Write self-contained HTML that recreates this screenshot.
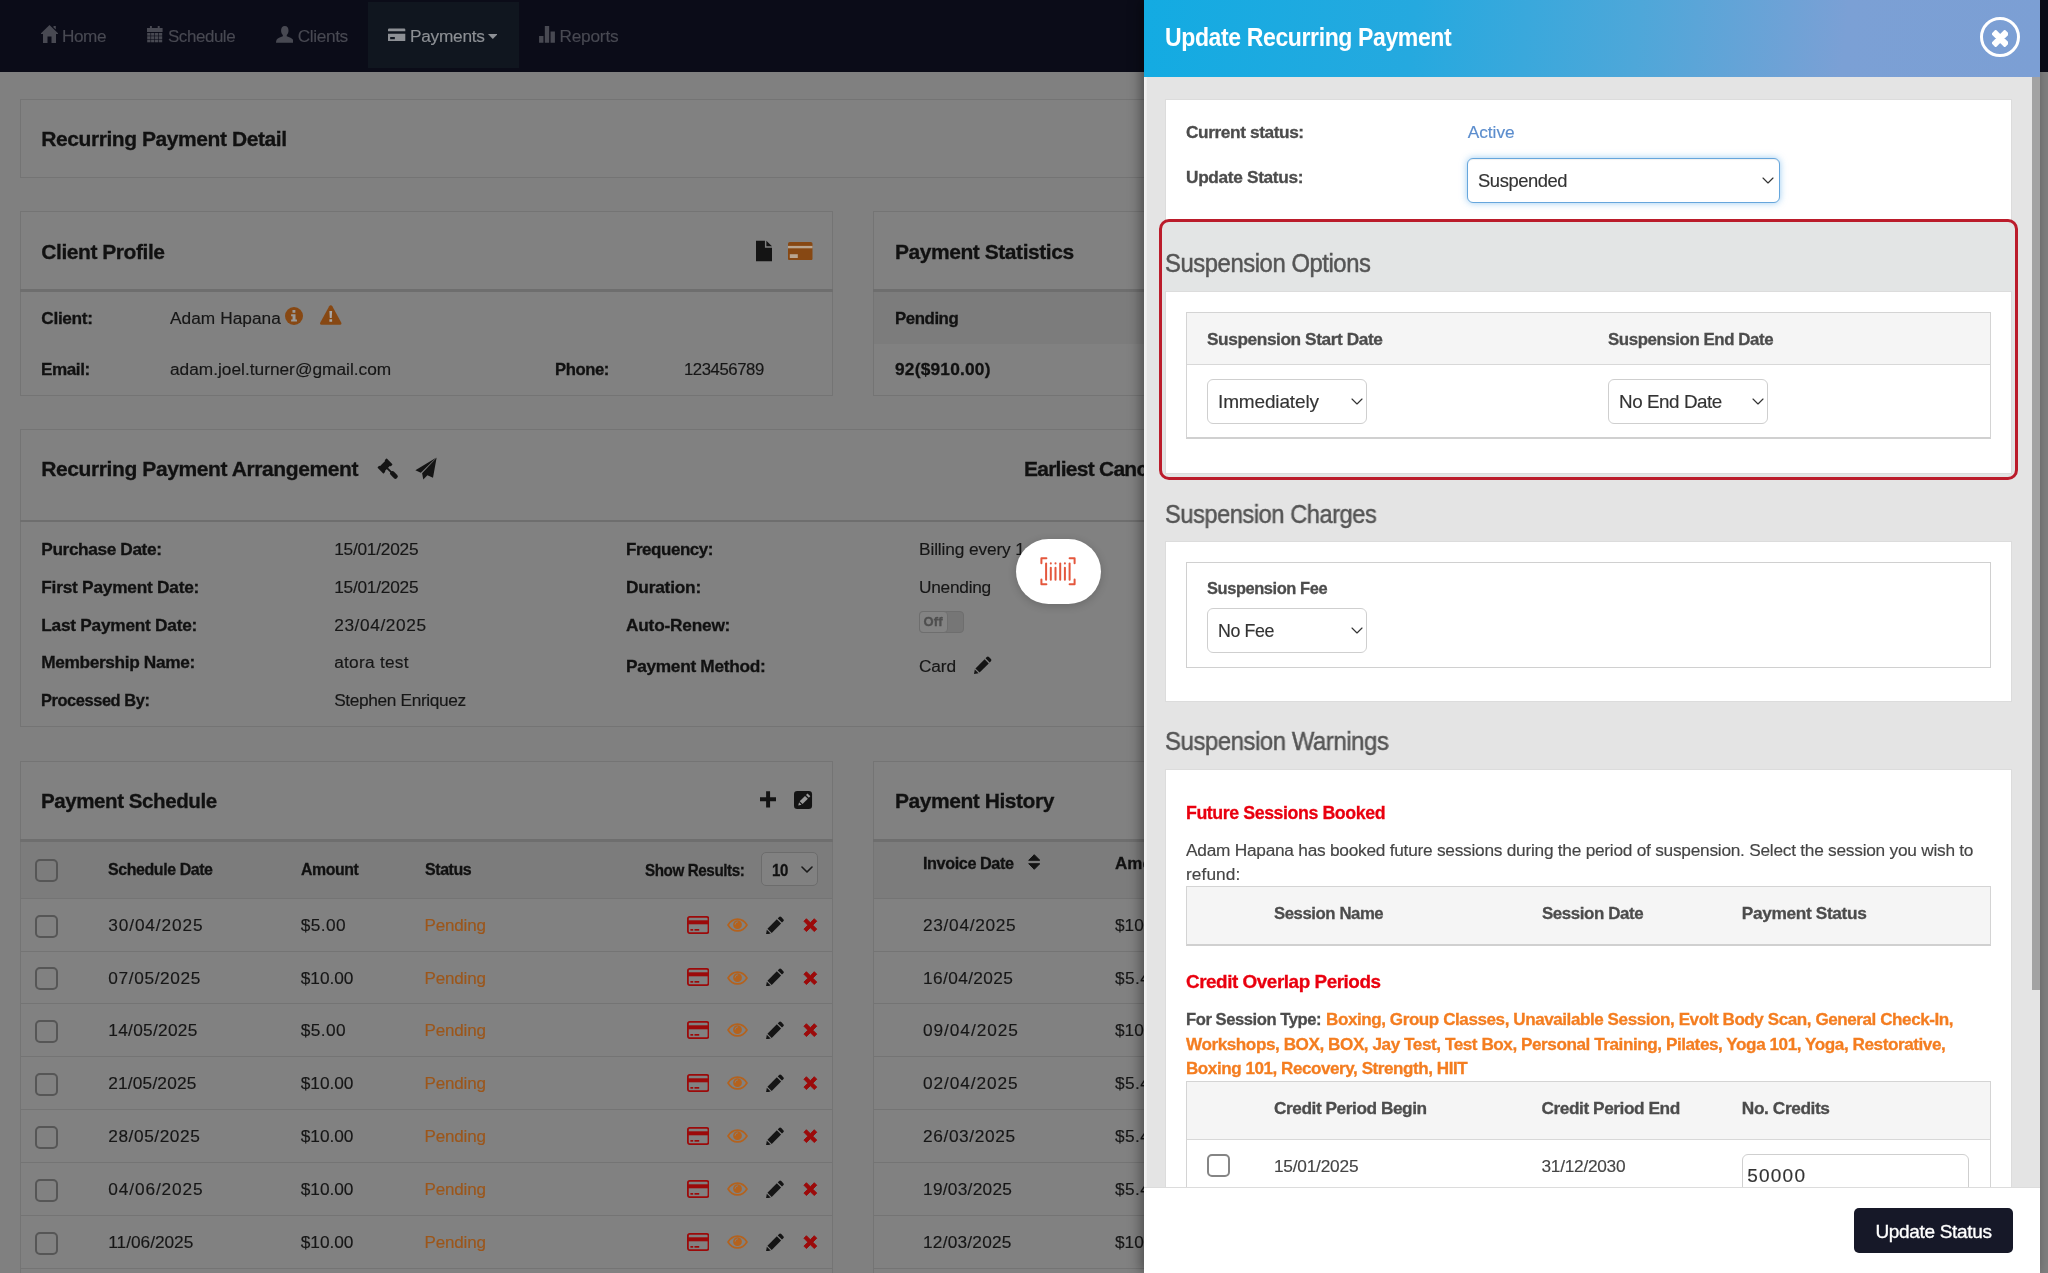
<!DOCTYPE html>
<html lang="en"><head><meta charset="utf-8"><title>Update Recurring Payment</title>
<style>
html,body{margin:0;padding:0;}
body{width:2048px;height:1273px;overflow:hidden;position:relative;background:#808080;font-family:"Liberation Sans",sans-serif;}
.t{position:absolute;white-space:nowrap;line-height:1;transform-origin:0 0;}
#left{position:absolute;left:0;top:0;width:2048px;height:1273px;overflow:hidden;will-change:transform;}
#modal{position:absolute;left:0;top:0;width:2048px;height:1273px;overflow:hidden;will-change:transform;}
</style></head><body>
<div id="left">
<div style="position:absolute;left:0px;top:0px;width:2048px;height:72px;background:#0b0c18;"></div>
<div style="position:absolute;left:368px;top:2px;width:151px;height:66px;background:#10161f;"></div>
<svg style="position:absolute;left:40.5px;top:25px;" width="17" height="18" viewBox="0 0 17 18"><path fill="#484952" d="M8.5 0 L17 8.2 V9 H15 V18 H10.5 V11.5 H6.5 V18 H2 V9 H0 V8.2 Z M12.5 1 h2.3 v3.6 l-2.3 -2.2z"/></svg>
<span class="t" style="left:61.7px;top:28.0px;font-size:17.3px;letter-spacing:-0.45px;transform:scaleX(0.9933);color:#484952;-webkit-text-stroke:0.15px #484952;">Home</span>
<svg style="position:absolute;left:147px;top:26px;" width="15.6" height="16.8" viewBox="0 0 16 17"><path fill="#484952" d="M0 2 H16 V6 H0Z M3 0 h2 v3.4 h-2z M11 0 h2 v3.4 h-2z"/><rect x="0.2" y="7.0" width="3.4" height="2.8" fill="#484952"/><rect x="4.2" y="7.0" width="3.4" height="2.8" fill="#484952"/><rect x="8.2" y="7.0" width="3.4" height="2.8" fill="#484952"/><rect x="12.2" y="7.0" width="3.4" height="2.8" fill="#484952"/><rect x="0.2" y="10.4" width="3.4" height="2.8" fill="#484952"/><rect x="4.2" y="10.4" width="3.4" height="2.8" fill="#484952"/><rect x="8.2" y="10.4" width="3.4" height="2.8" fill="#484952"/><rect x="12.2" y="10.4" width="3.4" height="2.8" fill="#484952"/><rect x="0.2" y="13.8" width="3.4" height="2.8" fill="#484952"/><rect x="4.2" y="13.8" width="3.4" height="2.8" fill="#484952"/><rect x="8.2" y="13.8" width="3.4" height="2.8" fill="#484952"/><rect x="12.2" y="13.8" width="3.4" height="2.8" fill="#484952"/></svg>
<span class="t" style="left:168.1px;top:28.0px;font-size:17.3px;letter-spacing:-0.45px;transform:scaleX(0.9813);color:#484952;-webkit-text-stroke:0.15px #484952;">Schedule</span>
<svg style="position:absolute;left:275.8px;top:26px;" width="17.6" height="16.8" viewBox="0 0 18 17"><path fill="#484952" d="M9 0 C11.6 0 12.8 2 12.8 4.6 C12.8 6.6 12 8.3 11 9.2 V10.4 C13.6 11.4 16.6 12.4 17.4 14 C17.8 14.9 18 16 18 17 H0 C0 16 .2 14.9 .6 14 C1.4 12.4 4.4 11.4 7 10.4 V9.2 C6 8.3 5.2 6.6 5.2 4.6 C5.2 2 6.4 0 9 0Z"/></svg>
<span class="t" style="left:297.8px;top:28.0px;font-size:17.3px;letter-spacing:-0.41px;color:#484952;-webkit-text-stroke:0.15px #484952;">Clients</span>
<svg style="position:absolute;left:388.4px;top:27.5px;" width="17.3" height="13.8" viewBox="0 0 24 18"><path fill="#8d9095" fill-rule="evenodd" d="M1.5 0 H22.5 Q24 0 24 1.5 V4 H0 V1.5 Q0 0 1.5 0Z M0 7.5 H24 V16.5 Q24 18 22.5 18 H1.5 Q0 18 0 16.5Z M3 12 H9.5 V15 H3Z"/></svg>
<span class="t" style="left:410.0px;top:28.0px;font-size:17.3px;letter-spacing:-0.27px;color:#8d9095;-webkit-text-stroke:0.15px #8d9095;">Payments</span>
<svg style="position:absolute;left:487.8px;top:34px;" width="9.6" height="5" viewBox="0 0 10 5"><path fill="#8d9095" d="M0 0H10L5 5Z"/></svg>
<svg style="position:absolute;left:539.4px;top:26px;" width="16" height="16.8" viewBox="0 0 16 17"><path fill="#484952" d="M0 10h4.4v7H0z M5.8 0h4.4v17H5.8z M11.6 5.5H16V17h-4.4z"/></svg>
<span class="t" style="left:559.4px;top:28.0px;font-size:17.3px;letter-spacing:-0.21px;color:#484952;-webkit-text-stroke:0.15px #484952;">Reports</span>
<div style="position:absolute;left:20px;top:99px;width:1200px;height:79px;background:#818181;border:1px solid #747474;box-sizing:border-box;"></div>
<span class="t" style="left:41.3px;top:128.0px;font-size:21px;letter-spacing:-0.43px;font-weight:700;color:#111111;-webkit-text-stroke:0.3px #111111;">Recurring Payment Detail</span>
<div style="position:absolute;left:20px;top:211px;width:813px;height:185px;background:#818181;border:1px solid #747474;box-sizing:border-box;"></div><div style="position:absolute;left:20px;top:289.0px;width:813px;height:2.5px;background:#6e6e6e;"></div>
<span class="t" style="left:41.3px;top:241.0px;font-size:21px;letter-spacing:-0.45px;font-weight:700;color:#111111;-webkit-text-stroke:0.3px #111111;">Client Profile</span>
<svg style="position:absolute;left:755.5px;top:239.7px;" width="16" height="22" viewBox="0 0 17 22"><path fill="#141414" d="M0 0H9.5V7.5H17V22H0Z M11 0 L17 6 H11Z"/></svg>
<svg style="position:absolute;left:788.2px;top:241.6px;" width="24.5" height="18.3" viewBox="0 0 24.500 18.300"><rect x="0" y="0" width="24.500" height="18.300" rx="1.800" fill="#874813"/><rect x="0" y="3.900" width="24.500" height="2.400" fill="#b9a590"/><rect x="1.800" y="12.200" width="8" height="3.800" fill="#b9a590"/></svg>
<span class="t" style="left:41.3px;top:310.0px;font-size:17.3px;letter-spacing:-0.35px;font-weight:700;color:#111111;-webkit-text-stroke:0.3px #111111;">Client:</span>
<span class="t" style="left:170.0px;top:310.0px;font-size:17.3px;letter-spacing:0.04px;color:#161616;-webkit-text-stroke:0.15px #161616;">Adam Hapana</span>
<span class="t" style="left:41.3px;top:361.0px;font-size:17.3px;letter-spacing:-0.45px;transform:scaleX(0.9906);font-weight:700;color:#111111;-webkit-text-stroke:0.3px #111111;">Email:</span>
<span class="t" style="left:170.0px;top:361.0px;font-size:17.3px;color:#161616;-webkit-text-stroke:0.15px #161616;">adam.joel.turner@gmail.com</span>
<span class="t" style="left:555.4px;top:361.0px;font-size:17.3px;letter-spacing:-0.45px;transform:scaleX(0.9649);font-weight:700;color:#111111;-webkit-text-stroke:0.3px #111111;">Phone:</span>
<span class="t" style="left:683.8px;top:361.0px;font-size:17.3px;letter-spacing:-0.45px;transform:scaleX(0.9687);color:#161616;-webkit-text-stroke:0.15px #161616;">123456789</span>
<svg style="position:absolute;left:285.3px;top:307px;" width="18" height="18" viewBox="0 0 20 20"><circle cx="10" cy="10" r="10" fill="#874813"/><path fill="#9a9a9a" d="M8.3 3.2h3.2v3.1H8.3z M6.8 8h4.9v6h1.6v2.2H6.8V14h1.6v-3.8H6.8z"/></svg>
<svg style="position:absolute;left:320px;top:305px;" width="21.5" height="20" viewBox="0 0 22 20"><path fill="#874813" d="M11 0 Q12 0 12.6 1 L21.7 17.6 Q22.5 20 20.4 20 H1.6 Q-.5 20 .3 17.6 L9.4 1 Q10 0 11 0Z"/><path fill="#a8a8a8" d="M9.6 6h2.8l-.4 7h-2z M9.6 14.3h2.8v2.6H9.6z"/></svg>
<div style="position:absolute;left:873px;top:211px;width:400px;height:185px;background:#818181;border:1px solid #747474;box-sizing:border-box;"></div><div style="position:absolute;left:873px;top:289.0px;width:400px;height:2.5px;background:#6e6e6e;"></div>
<div style="position:absolute;left:874px;top:291.5px;width:400px;height:52px;background:#7c7c7c;"></div>
<span class="t" style="left:895.0px;top:241.0px;font-size:21px;letter-spacing:-0.45px;transform:scaleX(0.9978);font-weight:700;color:#111111;-webkit-text-stroke:0.3px #111111;">Payment Statistics</span>
<span class="t" style="left:895.0px;top:310.0px;font-size:17.3px;letter-spacing:-0.45px;transform:scaleX(0.9735);font-weight:700;color:#111111;-webkit-text-stroke:0.3px #111111;">Pending</span>
<span class="t" style="left:895.0px;top:361.0px;font-size:17.3px;letter-spacing:0.22px;font-weight:700;color:#111111;-webkit-text-stroke:0.3px #111111;">92($910.00)</span>
<div style="position:absolute;left:20px;top:429px;width:1200px;height:298px;background:#818181;border:1px solid #747474;box-sizing:border-box;"></div><div style="position:absolute;left:20px;top:519.5px;width:1200px;height:2.5px;background:#6e6e6e;"></div>
<span class="t" style="left:41.3px;top:458.0px;font-size:21px;letter-spacing:-0.40px;font-weight:700;color:#111111;-webkit-text-stroke:0.3px #111111;">Recurring Payment Arrangement</span>
<svg style="position:absolute;left:374.5px;top:455.9px;" width="26" height="26" viewBox="0 0 26 26"><g fill="#141414" transform="translate(10 10) rotate(45)"><rect x="-3.5" y="-4.4" width="7" height="8.8"/><rect x="-4.3" y="-6.5" width="8.6" height="2.9" rx=".7"/><rect x="-4.3" y="3.6" width="8.6" height="2.9" rx=".7"/><rect x="3" y="-.9" width="6.5" height="1.8"/><rect x="8.2" y="-2.3" width="8.8" height="4.6" rx="2"/></g></svg>
<svg style="position:absolute;left:415px;top:457px;" width="23" height="23" viewBox="0 0 23 23"><g fill="#141414"><path d="M21.5 .6 L.4 13.3 L5.8 15.8Z"/><path d="M21.6 .8 L18 20.8 L12.4 18.3 L8.3 22.4 L7.1 16.2Z"/></g></svg>
<span class="t" style="left:1024.0px;top:458.0px;font-size:21px;font-weight:700;color:#111111;-webkit-text-stroke:0.3px #111111;letter-spacing:-0.75px;">Earliest Cancellation</span>
<span class="t" style="left:41.3px;top:541.0px;font-size:17.3px;letter-spacing:-0.40px;font-weight:700;color:#111111;-webkit-text-stroke:0.3px #111111;">Purchase Date:</span>
<span class="t" style="left:334.2px;top:541.0px;font-size:17.3px;letter-spacing:-0.24px;color:#161616;-webkit-text-stroke:0.15px #161616;">15/01/2025</span>
<span class="t" style="left:41.3px;top:579.0px;font-size:17.3px;letter-spacing:-0.24px;font-weight:700;color:#111111;-webkit-text-stroke:0.3px #111111;">First Payment Date:</span>
<span class="t" style="left:334.2px;top:579.0px;font-size:17.3px;letter-spacing:-0.24px;color:#161616;-webkit-text-stroke:0.15px #161616;">15/01/2025</span>
<span class="t" style="left:41.3px;top:617.0px;font-size:17.3px;letter-spacing:-0.26px;font-weight:700;color:#111111;-webkit-text-stroke:0.3px #111111;">Last Payment Date:</span>
<span class="t" style="left:334.2px;top:617.0px;font-size:17.3px;letter-spacing:0.60px;color:#161616;-webkit-text-stroke:0.15px #161616;">23/04/2025</span>
<span class="t" style="left:41.3px;top:654.0px;font-size:17.3px;letter-spacing:-0.37px;font-weight:700;color:#111111;-webkit-text-stroke:0.3px #111111;">Membership Name:</span>
<span class="t" style="left:334.2px;top:654.0px;font-size:17.3px;letter-spacing:0.26px;color:#161616;-webkit-text-stroke:0.15px #161616;">atora test</span>
<span class="t" style="left:41.3px;top:692.0px;font-size:17.3px;letter-spacing:-0.45px;transform:scaleX(0.9503);font-weight:700;color:#111111;-webkit-text-stroke:0.3px #111111;">Processed By:</span>
<span class="t" style="left:334.2px;top:692.0px;font-size:17.3px;letter-spacing:-0.36px;color:#161616;-webkit-text-stroke:0.15px #161616;">Stephen Enriquez</span>
<span class="t" style="left:626.0px;top:541.0px;font-size:17.3px;letter-spacing:-0.45px;transform:scaleX(0.9820);font-weight:700;color:#111111;-webkit-text-stroke:0.3px #111111;">Frequency:</span>
<span class="t" style="left:626.0px;top:579.0px;font-size:17.3px;letter-spacing:-0.20px;font-weight:700;color:#111111;-webkit-text-stroke:0.3px #111111;">Duration:</span>
<span class="t" style="left:626.0px;top:617.0px;font-size:17.3px;letter-spacing:-0.22px;font-weight:700;color:#111111;-webkit-text-stroke:0.3px #111111;">Auto-Renew:</span>
<span class="t" style="left:626.0px;top:658.0px;font-size:17.3px;letter-spacing:-0.31px;font-weight:700;color:#111111;-webkit-text-stroke:0.3px #111111;">Payment Method:</span>
<span class="t" style="left:919.0px;top:541.0px;font-size:17.3px;color:#161616;-webkit-text-stroke:0.15px #161616;letter-spacing:-0.12px;">Billing every 1 week</span>
<span class="t" style="left:919.0px;top:579.0px;font-size:17.3px;letter-spacing:-0.25px;color:#161616;-webkit-text-stroke:0.15px #161616;">Unending</span>
<div style="position:absolute;left:918.5px;top:611px;width:45px;height:21.5px;background:#767676;border-radius:4px;border:1px solid #6e6e6e;box-sizing:border-box;"></div>
<div style="position:absolute;left:918.5px;top:611px;width:29px;height:21.5px;background:#838383;border-radius:4px;border:1px solid #6e6e6e;box-sizing:border-box;"></div>
<span class="t" style="left:923.5px;top:615.0px;font-size:13px;letter-spacing:0.11px;font-weight:700;color:#4f4f4f;-webkit-text-stroke:0.3px #4f4f4f;">Off</span>
<span class="t" style="left:919.0px;top:658.0px;font-size:17.3px;letter-spacing:-0.13px;color:#161616;-webkit-text-stroke:0.15px #161616;">Card</span>
<svg style="position:absolute;left:973.8px;top:656px;" width="18" height="18" viewBox="0 0 20 20"><g fill="#141414"><path d="M14.2 1.2 Q15.4 0 16.6 1.2 L18.8 3.4 Q20 4.6 18.8 5.8 L17.4 7.2 L12.8 2.6Z"/><path d="M11.8 3.6 L16.4 8.2 L6.2 18.4 L1.6 13.8Z"/><path d="M0.9 14.9 L5.1 19.1 L0 20Z"/></g></svg>
<div style="position:absolute;left:20px;top:761px;width:813px;height:560px;background:#818181;border:1px solid #747474;box-sizing:border-box;"></div><div style="position:absolute;left:20px;top:839.0px;width:813px;height:2.5px;background:#6e6e6e;"></div>
<div style="position:absolute;left:21px;top:841.5px;width:811px;height:56.5px;background:#7c7c7c;"></div>
<span class="t" style="left:41.3px;top:790.0px;font-size:21px;letter-spacing:-0.45px;transform:scaleX(0.9784);font-weight:700;color:#111111;-webkit-text-stroke:0.3px #111111;">Payment Schedule</span>
<svg style="position:absolute;left:759.9px;top:791.2px;" width="16.2" height="16.7" viewBox="0 0 18 18"><path fill="#141414" d="M6.8 0h4.4v6.8H18v4.4h-6.8V18H6.8v-6.8H0V6.8h6.8z"/></svg>
<svg style="position:absolute;left:794px;top:790px;" width="19" height="19" viewBox="0 0 20 20"><rect x="0" y="1" width="19" height="19" rx="3.5" fill="#141414"/><g fill="#9a9a9a"><path d="M12.6 5.2 l1.6-1.6 l3 3 l-1.6 1.6z"/><path d="M11.6 6.2 l3 3 l-5.6 5.6 l-3 -3z"/><path d="M5.3 12.9 l2.6 2.6 l-3.4 .8z"/></g></svg>
<div style="position:absolute;left:35px;top:858.7px;width:23px;height:23px;border:2px solid #565656;border-radius:5px;box-sizing:border-box;background:transparent;"></div>
<span class="t" style="left:108.3px;top:861.0px;font-size:17px;letter-spacing:-0.45px;transform:scaleX(0.9396);font-weight:700;color:#111111;-webkit-text-stroke:0.3px #111111;">Schedule Date</span>
<span class="t" style="left:300.8px;top:861.0px;font-size:17px;letter-spacing:-0.45px;transform:scaleX(0.9329);font-weight:700;color:#111111;-webkit-text-stroke:0.3px #111111;">Amount</span>
<span class="t" style="left:424.6px;top:861.0px;font-size:17px;letter-spacing:-0.45px;transform:scaleX(0.9395);font-weight:700;color:#111111;-webkit-text-stroke:0.3px #111111;">Status</span>
<span class="t" style="left:644.6px;top:862.0px;font-size:17px;letter-spacing:-0.45px;transform:scaleX(0.8941);font-weight:700;color:#111111;-webkit-text-stroke:0.3px #111111;">Show Results:</span>
<div style="position:absolute;left:761.4px;top:852.3px;width:56.8px;height:34px;border:1px solid #6c6c6c;border-radius:5px;box-sizing:border-box;background:#818181;"></div>
<span class="t" style="left:771.5px;top:862.0px;font-size:17px;letter-spacing:-0.45px;transform:scaleX(0.8830);font-weight:700;color:#111111;-webkit-text-stroke:0.3px #111111;">10</span>
<svg style="position:absolute;left:801px;top:866px;" width="12" height="7" viewBox="0 0 12 7"><path fill="none" stroke="#1a1a1a" stroke-width="1.6" stroke-linecap="round" stroke-linejoin="round" d="M1 1 L6 6 L11 1"/></svg>
<div style="position:absolute;left:21px;top:898px;width:811px;height:1px;background:#747474;"></div>
<div style="position:absolute;left:35px;top:914.8px;width:23px;height:23px;border:2px solid #565656;border-radius:5px;box-sizing:border-box;background:transparent;"></div>
<span class="t" style="left:108.3px;top:917.0px;font-size:17.3px;letter-spacing:0.86px;color:#161616;-webkit-text-stroke:0.15px #161616;">30/04/2025</span>
<span class="t" style="left:300.8px;top:917.0px;font-size:17.3px;letter-spacing:0.38px;color:#161616;-webkit-text-stroke:0.15px #161616;">$5.00</span>
<span class="t" style="left:424.6px;top:917.0px;font-size:17px;letter-spacing:-0.17px;color:#9c561a;-webkit-text-stroke:0.15px #9c561a;">Pending</span>
<svg style="position:absolute;left:686.6px;top:915.6px;" width="22.4" height="18" viewBox="0 0 22.400 18"><rect x=".9" y=".9" width="20.600" height="16.200" rx="1.800" fill="none" stroke="#9c0a0a" stroke-width="1.800"/><rect x=".9" y="4.300" width="20.600" height="4" fill="#9c0a0a"/><rect x="3.400" y="13" width="2.800" height="1.700" fill="#9c0a0a"/><rect x="7.500" y="13" width="4.700" height="1.700" fill="#9c0a0a"/></svg>
<svg style="position:absolute;left:727.2px;top:917.9px;" width="21" height="14" viewBox="0 0 24 16"><path fill="none" stroke="#b4621d" stroke-width="1.900" d="M1.200 8 C4 3.300 8 1.200 12 1.200 C16 1.200 20 3.300 22.800 8 C20 12.700 16 14.800 12 14.800 C8 14.800 4 12.700 1.200 8Z"/><circle cx="12" cy="7.600" r="5" fill="#b4621d"/><path fill="none" stroke="#818181" stroke-width="1" stroke-linecap="round" d="M9.200 7.200 A2.900 2.900 0 0 1 12 4.400"/></svg>
<svg style="position:absolute;left:766px;top:915.5px;" width="18.4" height="18.4" viewBox="0 0 20 20"><g fill="#141414"><path d="M14.2 1.2 Q15.4 0 16.6 1.2 L18.8 3.4 Q20 4.6 18.8 5.8 L17.4 7.2 L12.8 2.6Z"/><path d="M11.8 3.6 L16.4 8.2 L6.2 18.4 L1.6 13.8Z"/><path d="M0.9 14.9 L5.1 19.1 L0 20Z"/></g></svg>
<svg style="position:absolute;left:803.1px;top:918px;" width="14.7" height="14.3" viewBox="0 0 16 16"><path fill="#9c0a0a" stroke="#9c0a0a" stroke-width="1" stroke-linejoin="round" d="M3.600 .8 L8 5.200 L12.400 .8 L15.200 3.600 L10.800 8 L15.200 12.400 L12.400 15.200 L8 10.800 L3.600 15.200 L.8 12.400 L5.200 8 L.8 3.600Z"/></svg>
<div style="position:absolute;left:21px;top:950.6px;width:811px;height:1px;background:#747474;"></div>
<div style="position:absolute;left:35px;top:967.4px;width:23px;height:23px;border:2px solid #565656;border-radius:5px;box-sizing:border-box;background:transparent;"></div>
<span class="t" style="left:108.3px;top:970.0px;font-size:17.3px;letter-spacing:0.63px;color:#161616;-webkit-text-stroke:0.15px #161616;">07/05/2025</span>
<span class="t" style="left:300.8px;top:970.0px;font-size:17.3px;letter-spacing:-0.04px;color:#161616;-webkit-text-stroke:0.15px #161616;">$10.00</span>
<span class="t" style="left:424.6px;top:970.0px;font-size:17px;letter-spacing:-0.17px;color:#9c561a;-webkit-text-stroke:0.15px #9c561a;">Pending</span>
<svg style="position:absolute;left:686.6px;top:968.2px;" width="22.4" height="18" viewBox="0 0 22.400 18"><rect x=".9" y=".9" width="20.600" height="16.200" rx="1.800" fill="none" stroke="#9c0a0a" stroke-width="1.800"/><rect x=".9" y="4.300" width="20.600" height="4" fill="#9c0a0a"/><rect x="3.400" y="13" width="2.800" height="1.700" fill="#9c0a0a"/><rect x="7.500" y="13" width="4.700" height="1.700" fill="#9c0a0a"/></svg>
<svg style="position:absolute;left:727.2px;top:970.5px;" width="21" height="14" viewBox="0 0 24 16"><path fill="none" stroke="#b4621d" stroke-width="1.900" d="M1.200 8 C4 3.300 8 1.200 12 1.200 C16 1.200 20 3.300 22.800 8 C20 12.700 16 14.800 12 14.800 C8 14.800 4 12.700 1.200 8Z"/><circle cx="12" cy="7.600" r="5" fill="#b4621d"/><path fill="none" stroke="#818181" stroke-width="1" stroke-linecap="round" d="M9.200 7.200 A2.900 2.900 0 0 1 12 4.400"/></svg>
<svg style="position:absolute;left:766px;top:968.1px;" width="18.4" height="18.4" viewBox="0 0 20 20"><g fill="#141414"><path d="M14.2 1.2 Q15.4 0 16.6 1.2 L18.8 3.4 Q20 4.6 18.8 5.8 L17.4 7.2 L12.8 2.6Z"/><path d="M11.8 3.6 L16.4 8.2 L6.2 18.4 L1.6 13.8Z"/><path d="M0.9 14.9 L5.1 19.1 L0 20Z"/></g></svg>
<svg style="position:absolute;left:803.1px;top:970.6px;" width="14.7" height="14.3" viewBox="0 0 16 16"><path fill="#9c0a0a" stroke="#9c0a0a" stroke-width="1" stroke-linejoin="round" d="M3.600 .8 L8 5.200 L12.400 .8 L15.200 3.600 L10.800 8 L15.200 12.400 L12.400 15.200 L8 10.800 L3.600 15.200 L.8 12.400 L5.200 8 L.8 3.600Z"/></svg>
<div style="position:absolute;left:21px;top:1003.4px;width:811px;height:1px;background:#747474;"></div>
<div style="position:absolute;left:35px;top:1020.1999999999999px;width:23px;height:23px;border:2px solid #565656;border-radius:5px;box-sizing:border-box;background:transparent;"></div>
<span class="t" style="left:108.3px;top:1022.0px;font-size:17.3px;letter-spacing:0.28px;color:#161616;-webkit-text-stroke:0.15px #161616;">14/05/2025</span>
<span class="t" style="left:300.8px;top:1022.0px;font-size:17.3px;letter-spacing:0.38px;color:#161616;-webkit-text-stroke:0.15px #161616;">$5.00</span>
<span class="t" style="left:424.6px;top:1022.0px;font-size:17px;letter-spacing:-0.17px;color:#9c561a;-webkit-text-stroke:0.15px #9c561a;">Pending</span>
<svg style="position:absolute;left:686.6px;top:1021.0px;" width="22.4" height="18" viewBox="0 0 22.400 18"><rect x=".9" y=".9" width="20.600" height="16.200" rx="1.800" fill="none" stroke="#9c0a0a" stroke-width="1.800"/><rect x=".9" y="4.300" width="20.600" height="4" fill="#9c0a0a"/><rect x="3.400" y="13" width="2.800" height="1.700" fill="#9c0a0a"/><rect x="7.500" y="13" width="4.700" height="1.700" fill="#9c0a0a"/></svg>
<svg style="position:absolute;left:727.2px;top:1023.3px;" width="21" height="14" viewBox="0 0 24 16"><path fill="none" stroke="#b4621d" stroke-width="1.900" d="M1.200 8 C4 3.300 8 1.200 12 1.200 C16 1.200 20 3.300 22.800 8 C20 12.700 16 14.800 12 14.800 C8 14.800 4 12.700 1.200 8Z"/><circle cx="12" cy="7.600" r="5" fill="#b4621d"/><path fill="none" stroke="#818181" stroke-width="1" stroke-linecap="round" d="M9.200 7.200 A2.900 2.900 0 0 1 12 4.400"/></svg>
<svg style="position:absolute;left:766px;top:1020.9px;" width="18.4" height="18.4" viewBox="0 0 20 20"><g fill="#141414"><path d="M14.2 1.2 Q15.4 0 16.6 1.2 L18.8 3.4 Q20 4.6 18.8 5.8 L17.4 7.2 L12.8 2.6Z"/><path d="M11.8 3.6 L16.4 8.2 L6.2 18.4 L1.6 13.8Z"/><path d="M0.9 14.9 L5.1 19.1 L0 20Z"/></g></svg>
<svg style="position:absolute;left:803.1px;top:1023.4px;" width="14.7" height="14.3" viewBox="0 0 16 16"><path fill="#9c0a0a" stroke="#9c0a0a" stroke-width="1" stroke-linejoin="round" d="M3.600 .8 L8 5.200 L12.400 .8 L15.200 3.600 L10.800 8 L15.200 12.400 L12.400 15.200 L8 10.800 L3.600 15.200 L.8 12.400 L5.200 8 L.8 3.600Z"/></svg>
<div style="position:absolute;left:21px;top:1056.4px;width:811px;height:1px;background:#747474;"></div>
<div style="position:absolute;left:35px;top:1073.2px;width:23px;height:23px;border:2px solid #565656;border-radius:5px;box-sizing:border-box;background:transparent;"></div>
<span class="t" style="left:108.3px;top:1075.0px;font-size:17.3px;letter-spacing:0.17px;color:#161616;-webkit-text-stroke:0.15px #161616;">21/05/2025</span>
<span class="t" style="left:300.8px;top:1075.0px;font-size:17.3px;letter-spacing:-0.04px;color:#161616;-webkit-text-stroke:0.15px #161616;">$10.00</span>
<span class="t" style="left:424.6px;top:1075.0px;font-size:17px;letter-spacing:-0.17px;color:#9c561a;-webkit-text-stroke:0.15px #9c561a;">Pending</span>
<svg style="position:absolute;left:686.6px;top:1074.0px;" width="22.4" height="18" viewBox="0 0 22.400 18"><rect x=".9" y=".9" width="20.600" height="16.200" rx="1.800" fill="none" stroke="#9c0a0a" stroke-width="1.800"/><rect x=".9" y="4.300" width="20.600" height="4" fill="#9c0a0a"/><rect x="3.400" y="13" width="2.800" height="1.700" fill="#9c0a0a"/><rect x="7.500" y="13" width="4.700" height="1.700" fill="#9c0a0a"/></svg>
<svg style="position:absolute;left:727.2px;top:1076.3000000000002px;" width="21" height="14" viewBox="0 0 24 16"><path fill="none" stroke="#b4621d" stroke-width="1.900" d="M1.200 8 C4 3.300 8 1.200 12 1.200 C16 1.200 20 3.300 22.800 8 C20 12.700 16 14.800 12 14.800 C8 14.800 4 12.700 1.200 8Z"/><circle cx="12" cy="7.600" r="5" fill="#b4621d"/><path fill="none" stroke="#818181" stroke-width="1" stroke-linecap="round" d="M9.200 7.200 A2.900 2.900 0 0 1 12 4.400"/></svg>
<svg style="position:absolute;left:766px;top:1073.9px;" width="18.4" height="18.4" viewBox="0 0 20 20"><g fill="#141414"><path d="M14.2 1.2 Q15.4 0 16.6 1.2 L18.8 3.4 Q20 4.6 18.8 5.8 L17.4 7.2 L12.8 2.6Z"/><path d="M11.8 3.6 L16.4 8.2 L6.2 18.4 L1.6 13.8Z"/><path d="M0.9 14.9 L5.1 19.1 L0 20Z"/></g></svg>
<svg style="position:absolute;left:803.1px;top:1076.4px;" width="14.7" height="14.3" viewBox="0 0 16 16"><path fill="#9c0a0a" stroke="#9c0a0a" stroke-width="1" stroke-linejoin="round" d="M3.600 .8 L8 5.200 L12.400 .8 L15.200 3.600 L10.800 8 L15.200 12.400 L12.400 15.200 L8 10.800 L3.600 15.200 L.8 12.400 L5.200 8 L.8 3.600Z"/></svg>
<div style="position:absolute;left:21px;top:1109.3px;width:811px;height:1px;background:#747474;"></div>
<div style="position:absolute;left:35px;top:1126.1px;width:23px;height:23px;border:2px solid #565656;border-radius:5px;box-sizing:border-box;background:transparent;"></div>
<span class="t" style="left:108.3px;top:1128.0px;font-size:17.3px;letter-spacing:0.55px;color:#161616;-webkit-text-stroke:0.15px #161616;">28/05/2025</span>
<span class="t" style="left:300.8px;top:1128.0px;font-size:17.3px;letter-spacing:-0.04px;color:#161616;-webkit-text-stroke:0.15px #161616;">$10.00</span>
<span class="t" style="left:424.6px;top:1128.0px;font-size:17px;letter-spacing:-0.17px;color:#9c561a;-webkit-text-stroke:0.15px #9c561a;">Pending</span>
<svg style="position:absolute;left:686.6px;top:1126.8999999999999px;" width="22.4" height="18" viewBox="0 0 22.400 18"><rect x=".9" y=".9" width="20.600" height="16.200" rx="1.800" fill="none" stroke="#9c0a0a" stroke-width="1.800"/><rect x=".9" y="4.300" width="20.600" height="4" fill="#9c0a0a"/><rect x="3.400" y="13" width="2.800" height="1.700" fill="#9c0a0a"/><rect x="7.500" y="13" width="4.700" height="1.700" fill="#9c0a0a"/></svg>
<svg style="position:absolute;left:727.2px;top:1129.2px;" width="21" height="14" viewBox="0 0 24 16"><path fill="none" stroke="#b4621d" stroke-width="1.900" d="M1.200 8 C4 3.300 8 1.200 12 1.200 C16 1.200 20 3.300 22.800 8 C20 12.700 16 14.800 12 14.800 C8 14.800 4 12.700 1.200 8Z"/><circle cx="12" cy="7.600" r="5" fill="#b4621d"/><path fill="none" stroke="#818181" stroke-width="1" stroke-linecap="round" d="M9.200 7.200 A2.900 2.900 0 0 1 12 4.400"/></svg>
<svg style="position:absolute;left:766px;top:1126.8px;" width="18.4" height="18.4" viewBox="0 0 20 20"><g fill="#141414"><path d="M14.2 1.2 Q15.4 0 16.6 1.2 L18.8 3.4 Q20 4.6 18.8 5.8 L17.4 7.2 L12.8 2.6Z"/><path d="M11.8 3.6 L16.4 8.2 L6.2 18.4 L1.6 13.8Z"/><path d="M0.9 14.9 L5.1 19.1 L0 20Z"/></g></svg>
<svg style="position:absolute;left:803.1px;top:1129.3px;" width="14.7" height="14.3" viewBox="0 0 16 16"><path fill="#9c0a0a" stroke="#9c0a0a" stroke-width="1" stroke-linejoin="round" d="M3.600 .8 L8 5.200 L12.400 .8 L15.200 3.600 L10.800 8 L15.200 12.400 L12.400 15.200 L8 10.800 L3.600 15.200 L.8 12.400 L5.200 8 L.8 3.600Z"/></svg>
<div style="position:absolute;left:21px;top:1162.1px;width:811px;height:1px;background:#747474;"></div>
<div style="position:absolute;left:35px;top:1178.8999999999999px;width:23px;height:23px;border:2px solid #565656;border-radius:5px;box-sizing:border-box;background:transparent;"></div>
<span class="t" style="left:108.3px;top:1181.0px;font-size:17.3px;letter-spacing:0.88px;color:#161616;-webkit-text-stroke:0.15px #161616;">04/06/2025</span>
<span class="t" style="left:300.8px;top:1181.0px;font-size:17.3px;letter-spacing:-0.04px;color:#161616;-webkit-text-stroke:0.15px #161616;">$10.00</span>
<span class="t" style="left:424.6px;top:1181.0px;font-size:17px;letter-spacing:-0.17px;color:#9c561a;-webkit-text-stroke:0.15px #9c561a;">Pending</span>
<svg style="position:absolute;left:686.6px;top:1179.6999999999998px;" width="22.4" height="18" viewBox="0 0 22.400 18"><rect x=".9" y=".9" width="20.600" height="16.200" rx="1.800" fill="none" stroke="#9c0a0a" stroke-width="1.800"/><rect x=".9" y="4.300" width="20.600" height="4" fill="#9c0a0a"/><rect x="3.400" y="13" width="2.800" height="1.700" fill="#9c0a0a"/><rect x="7.500" y="13" width="4.700" height="1.700" fill="#9c0a0a"/></svg>
<svg style="position:absolute;left:727.2px;top:1182.0px;" width="21" height="14" viewBox="0 0 24 16"><path fill="none" stroke="#b4621d" stroke-width="1.900" d="M1.200 8 C4 3.300 8 1.200 12 1.200 C16 1.200 20 3.300 22.800 8 C20 12.700 16 14.800 12 14.800 C8 14.800 4 12.700 1.200 8Z"/><circle cx="12" cy="7.600" r="5" fill="#b4621d"/><path fill="none" stroke="#818181" stroke-width="1" stroke-linecap="round" d="M9.200 7.200 A2.900 2.900 0 0 1 12 4.400"/></svg>
<svg style="position:absolute;left:766px;top:1179.6px;" width="18.4" height="18.4" viewBox="0 0 20 20"><g fill="#141414"><path d="M14.2 1.2 Q15.4 0 16.6 1.2 L18.8 3.4 Q20 4.6 18.8 5.8 L17.4 7.2 L12.8 2.6Z"/><path d="M11.8 3.6 L16.4 8.2 L6.2 18.4 L1.6 13.8Z"/><path d="M0.9 14.9 L5.1 19.1 L0 20Z"/></g></svg>
<svg style="position:absolute;left:803.1px;top:1182.1px;" width="14.7" height="14.3" viewBox="0 0 16 16"><path fill="#9c0a0a" stroke="#9c0a0a" stroke-width="1" stroke-linejoin="round" d="M3.600 .8 L8 5.200 L12.400 .8 L15.200 3.600 L10.800 8 L15.200 12.400 L12.400 15.200 L8 10.800 L3.600 15.200 L.8 12.400 L5.200 8 L.8 3.600Z"/></svg>
<div style="position:absolute;left:21px;top:1215px;width:811px;height:1px;background:#747474;"></div>
<div style="position:absolute;left:35px;top:1231.8px;width:23px;height:23px;border:2px solid #565656;border-radius:5px;box-sizing:border-box;background:transparent;"></div>
<span class="t" style="left:108.3px;top:1234.0px;font-size:17.3px;letter-spacing:-0.02px;color:#161616;-webkit-text-stroke:0.15px #161616;">11/06/2025</span>
<span class="t" style="left:300.8px;top:1234.0px;font-size:17.3px;letter-spacing:-0.04px;color:#161616;-webkit-text-stroke:0.15px #161616;">$10.00</span>
<span class="t" style="left:424.6px;top:1234.0px;font-size:17px;letter-spacing:-0.17px;color:#9c561a;-webkit-text-stroke:0.15px #9c561a;">Pending</span>
<svg style="position:absolute;left:686.6px;top:1232.6px;" width="22.4" height="18" viewBox="0 0 22.400 18"><rect x=".9" y=".9" width="20.600" height="16.200" rx="1.800" fill="none" stroke="#9c0a0a" stroke-width="1.800"/><rect x=".9" y="4.300" width="20.600" height="4" fill="#9c0a0a"/><rect x="3.400" y="13" width="2.800" height="1.700" fill="#9c0a0a"/><rect x="7.500" y="13" width="4.700" height="1.700" fill="#9c0a0a"/></svg>
<svg style="position:absolute;left:727.2px;top:1234.9px;" width="21" height="14" viewBox="0 0 24 16"><path fill="none" stroke="#b4621d" stroke-width="1.900" d="M1.200 8 C4 3.300 8 1.200 12 1.200 C16 1.200 20 3.300 22.800 8 C20 12.700 16 14.800 12 14.800 C8 14.800 4 12.700 1.200 8Z"/><circle cx="12" cy="7.600" r="5" fill="#b4621d"/><path fill="none" stroke="#818181" stroke-width="1" stroke-linecap="round" d="M9.200 7.200 A2.900 2.900 0 0 1 12 4.400"/></svg>
<svg style="position:absolute;left:766px;top:1232.5px;" width="18.4" height="18.4" viewBox="0 0 20 20"><g fill="#141414"><path d="M14.2 1.2 Q15.4 0 16.6 1.2 L18.8 3.4 Q20 4.6 18.8 5.8 L17.4 7.2 L12.8 2.6Z"/><path d="M11.8 3.6 L16.4 8.2 L6.2 18.4 L1.6 13.8Z"/><path d="M0.9 14.9 L5.1 19.1 L0 20Z"/></g></svg>
<svg style="position:absolute;left:803.1px;top:1235px;" width="14.7" height="14.3" viewBox="0 0 16 16"><path fill="#9c0a0a" stroke="#9c0a0a" stroke-width="1" stroke-linejoin="round" d="M3.600 .8 L8 5.200 L12.400 .8 L15.200 3.600 L10.800 8 L15.200 12.400 L12.400 15.200 L8 10.800 L3.600 15.200 L.8 12.400 L5.200 8 L.8 3.600Z"/></svg>
<div style="position:absolute;left:21px;top:1268px;width:811px;height:1px;background:#747474;"></div>
<div style="position:absolute;left:873px;top:761px;width:400px;height:560px;background:#818181;border:1px solid #747474;box-sizing:border-box;"></div><div style="position:absolute;left:873px;top:839.0px;width:400px;height:2.5px;background:#6e6e6e;"></div>
<div style="position:absolute;left:874px;top:841.5px;width:400px;height:56.5px;background:#7c7c7c;"></div>
<span class="t" style="left:894.6px;top:790.0px;font-size:21px;letter-spacing:-0.45px;transform:scaleX(0.9998);font-weight:700;color:#111111;-webkit-text-stroke:0.3px #111111;">Payment History</span>
<span class="t" style="left:923.0px;top:855.0px;font-size:17px;letter-spacing:-0.45px;transform:scaleX(0.9559);font-weight:700;color:#111111;-webkit-text-stroke:0.3px #111111;">Invoice Date</span>
<svg style="position:absolute;left:1027.8px;top:853.9px;" width="12.5" height="16" viewBox="0 0 12.500 16"><path fill="#141414" stroke="#141414" stroke-width="1" stroke-linejoin="round" d="M6.250 .7 L11.800 6.300 H.7Z M.7 9.700 H11.800 L6.250 15.300Z"/></svg>
<span class="t" style="left:1115.0px;top:855.0px;font-size:17px;font-weight:700;color:#111111;-webkit-text-stroke:0.3px #111111;">Amount</span>
<div style="position:absolute;left:874px;top:898px;width:400px;height:1px;background:#747474;"></div>
<span class="t" style="left:923.0px;top:917.0px;font-size:17.3px;letter-spacing:0.69px;color:#161616;-webkit-text-stroke:0.15px #161616;">23/04/2025</span>
<span class="t" style="left:1115.0px;top:917.0px;font-size:17.3px;letter-spacing:-0.04px;color:#161616;-webkit-text-stroke:0.15px #161616;">$10.00</span>
<div style="position:absolute;left:874px;top:950.6px;width:400px;height:1px;background:#747474;"></div>
<span class="t" style="left:923.0px;top:970.0px;font-size:17.3px;letter-spacing:0.38px;color:#161616;-webkit-text-stroke:0.15px #161616;">16/04/2025</span>
<span class="t" style="left:1115.0px;top:970.0px;font-size:17.3px;letter-spacing:0.38px;color:#161616;-webkit-text-stroke:0.15px #161616;">$5.45</span>
<div style="position:absolute;left:874px;top:1003.4px;width:400px;height:1px;background:#747474;"></div>
<span class="t" style="left:923.0px;top:1022.0px;font-size:17.3px;letter-spacing:0.93px;color:#161616;-webkit-text-stroke:0.15px #161616;">09/04/2025</span>
<span class="t" style="left:1115.0px;top:1022.0px;font-size:17.3px;letter-spacing:-0.04px;color:#161616;-webkit-text-stroke:0.15px #161616;">$10.00</span>
<div style="position:absolute;left:874px;top:1056.4px;width:400px;height:1px;background:#747474;"></div>
<span class="t" style="left:923.0px;top:1075.0px;font-size:17.3px;letter-spacing:0.89px;color:#161616;-webkit-text-stroke:0.15px #161616;">02/04/2025</span>
<span class="t" style="left:1115.0px;top:1075.0px;font-size:17.3px;letter-spacing:0.38px;color:#161616;-webkit-text-stroke:0.15px #161616;">$5.45</span>
<div style="position:absolute;left:874px;top:1109.3px;width:400px;height:1px;background:#747474;"></div>
<span class="t" style="left:923.0px;top:1128.0px;font-size:17.3px;letter-spacing:0.62px;color:#161616;-webkit-text-stroke:0.15px #161616;">26/03/2025</span>
<span class="t" style="left:1115.0px;top:1128.0px;font-size:17.3px;letter-spacing:0.38px;color:#161616;-webkit-text-stroke:0.15px #161616;">$5.45</span>
<div style="position:absolute;left:874px;top:1162.1px;width:400px;height:1px;background:#747474;"></div>
<span class="t" style="left:923.0px;top:1181.0px;font-size:17.3px;letter-spacing:0.27px;color:#161616;-webkit-text-stroke:0.15px #161616;">19/03/2025</span>
<span class="t" style="left:1115.0px;top:1181.0px;font-size:17.3px;letter-spacing:0.38px;color:#161616;-webkit-text-stroke:0.15px #161616;">$5.45</span>
<div style="position:absolute;left:874px;top:1215px;width:400px;height:1px;background:#747474;"></div>
<span class="t" style="left:923.0px;top:1234.0px;font-size:17.3px;letter-spacing:0.22px;color:#161616;-webkit-text-stroke:0.15px #161616;">12/03/2025</span>
<span class="t" style="left:1115.0px;top:1234.0px;font-size:17.3px;letter-spacing:-0.04px;color:#161616;-webkit-text-stroke:0.15px #161616;">$10.00</span>
<div style="position:absolute;left:874px;top:1268px;width:400px;height:1px;background:#747474;"></div>
<div style="position:absolute;left:1015.5px;top:539px;width:85px;height:64.5px;background:#fff;border-radius:33px;box-shadow:0 2px 8px rgba(0,0,0,.18);"></div>
<svg style="position:absolute;left:1040px;top:557px;" width="36" height="29" viewBox="0 0 36 29"><g fill="none" stroke="#e4573d" stroke-width="2" stroke-linecap="round" stroke-linejoin="round"><path d="M6.4 1.3H1.4V6.2"/><path d="M29.6 1.3H34.6V6.2"/><path d="M1.400 22.600V27.300H6.400"/><path d="M34.600 22.600V27.300H29.600"/><path d="M6.1 6.400V22.700"/><path d="M10.8 6.300V6.500"/><path d="M10.8 10.800V22.700"/><path d="M15.5 6.300V6.500"/><path d="M15.5 10.800V22.700"/><path d="M20.2 6.400V22.700"/><path d="M24.9 6.300V6.500"/><path d="M24.9 10.800V22.700"/><path d="M29.6 6.400V22.700"/></g></svg>
</div>
<div id="modal">
<div style="position:absolute;left:1144px;top:0px;width:896px;height:1273px;background:#e4e4e4;box-shadow:-3px 0 12px rgba(0,0,0,.42);"></div>
<div style="position:absolute;left:1144px;top:77px;width:3px;height:1196px;background:linear-gradient(90deg,#f6f6f6,#ececec);"></div>
<div style="position:absolute;left:1144px;top:0px;width:896px;height:77px;background:linear-gradient(96deg,#13abe2 0%,#25a9df 30%,#4ea7d9 55%,#7ba0d5 78%,#7c9fd4 100%);"></div>
<span class="t" style="left:1164.8px;top:24.0px;font-size:26px;letter-spacing:-0.45px;transform:scaleX(0.8865);font-weight:700;color:#fff;-webkit-text-stroke:0.01px #fff;">Update Recurring Payment</span>
<div style="position:absolute;left:1980px;top:17px;width:40px;height:40px;border:3px solid #fff;border-radius:50%;box-sizing:border-box;"></div>
<svg style="position:absolute;left:1992px;top:30.3px;" width="16.4" height="17" viewBox="0 0 16 16"><path fill="#fff" stroke="#fff" stroke-width="2.2" stroke-linejoin="round" d="M3.600 .8 L8 5.200 L12.400 .8 L15.200 3.600 L10.800 8 L15.200 12.400 L12.400 15.200 L8 10.800 L3.600 15.200 L.8 12.400 L5.200 8 L.8 3.600Z"/></svg>
<div style="position:absolute;left:2032px;top:77px;width:8px;height:913px;background:#a2a2a2;"></div>
<div style="position:absolute;left:1164.5px;top:98.5px;width:847px;height:200px;background:#fff;border:1px solid #dcdcdc;box-sizing:border-box;"></div>
<span class="t" style="left:1186.0px;top:124.0px;font-size:17.3px;letter-spacing:-0.41px;font-weight:700;color:#4c4c4c;-webkit-text-stroke:0.3px #4c4c4c;">Current status:</span>
<span class="t" style="left:1467.7px;top:124.0px;font-size:17.3px;letter-spacing:-0.02px;color:#5b8dcd;-webkit-text-stroke:0.15px #5b8dcd;">Active</span>
<span class="t" style="left:1186.0px;top:169.0px;font-size:17.3px;letter-spacing:-0.34px;font-weight:700;color:#4c4c4c;-webkit-text-stroke:0.3px #4c4c4c;">Update Status:</span>
<div style="position:absolute;left:1467px;top:157.5px;width:312.5px;height:45px;background:#fff;border:1px solid #66a6dc;border-radius:6px;box-sizing:border-box;box-shadow:inset 0 1px 1px rgba(0,0,0,.06),0 0 7px rgba(102,175,233,.65);"></div>
<span class="t" style="left:1478.4px;top:171.0px;font-size:19px;letter-spacing:-0.45px;transform:scaleX(0.9682);color:#333;-webkit-text-stroke:0.15px #333;">Suspended</span>
<svg style="position:absolute;left:1762px;top:176.5px;" width="12" height="7" viewBox="0 0 12 7"><path fill="none" stroke="#333" stroke-width="1.15" stroke-linecap="round" stroke-linejoin="round" d="M1 1 L6 6 L11 1"/></svg>
<div style="position:absolute;left:1158.7px;top:218.7px;width:859.3px;height:261.4px;background:#e3e5e5;border:3px solid #bb1c2b;border-radius:10px;box-sizing:border-box;"></div>
<span class="t" style="left:1164.8px;top:251.0px;font-size:25px;letter-spacing:-0.45px;transform:scaleX(0.9528);color:#555;-webkit-text-stroke:0.45px #555;">Suspension Options</span>
<div style="position:absolute;left:1164.5px;top:290.5px;width:847px;height:183px;background:#fff;border:1px solid #dcdcdc;box-sizing:border-box;"></div>
<div style="position:absolute;left:1186px;top:312px;width:804.5px;height:127px;background:#fff;border:1px solid #d4d4d4;border-bottom:2px solid #d0d0d0;box-sizing:border-box;"></div>
<div style="position:absolute;left:1187px;top:313px;width:802.5px;height:51px;background:#f5f5f5;border-bottom:1px solid #d8d8d8;"></div>
<span class="t" style="left:1207.0px;top:331.0px;font-size:17.3px;letter-spacing:-0.42px;font-weight:700;color:#4c4c4c;-webkit-text-stroke:0.3px #4c4c4c;">Suspension Start Date</span>
<span class="t" style="left:1608.3px;top:331.0px;font-size:17.3px;letter-spacing:-0.45px;transform:scaleX(0.9768);font-weight:700;color:#4c4c4c;-webkit-text-stroke:0.3px #4c4c4c;">Suspension End Date</span>
<div style="position:absolute;left:1207px;top:379.2px;width:160px;height:44.4px;background:#fff;border:1px solid #cfcfcf;border-radius:6px;box-sizing:border-box;"></div><span class="t" style="left:1218.0px;top:392.0px;font-size:19px;letter-spacing:-0.14px;color:#333;-webkit-text-stroke:0.15px #333;">Immediately</span><svg style="position:absolute;left:1350.5px;top:397.9px;" width="12" height="7" viewBox="0 0 12 7"><path fill="none" stroke="#333" stroke-width="1.15" stroke-linecap="round" stroke-linejoin="round" d="M1 1 L6 6 L11 1"/></svg>
<div style="position:absolute;left:1608.3px;top:379.2px;width:160px;height:44.4px;background:#fff;border:1px solid #cfcfcf;border-radius:6px;box-sizing:border-box;"></div><span class="t" style="left:1619.3px;top:392.0px;font-size:19px;letter-spacing:-0.45px;transform:scaleX(0.9905);color:#333;-webkit-text-stroke:0.15px #333;">No End Date</span><svg style="position:absolute;left:1751.8px;top:397.9px;" width="12" height="7" viewBox="0 0 12 7"><path fill="none" stroke="#333" stroke-width="1.15" stroke-linecap="round" stroke-linejoin="round" d="M1 1 L6 6 L11 1"/></svg>
<span class="t" style="left:1164.8px;top:502.0px;font-size:25px;letter-spacing:-0.45px;transform:scaleX(0.9432);color:#555;-webkit-text-stroke:0.45px #555;">Suspension Charges</span>
<div style="position:absolute;left:1164.5px;top:540.5px;width:847px;height:161px;background:#fff;border:1px solid #dcdcdc;box-sizing:border-box;"></div>
<div style="position:absolute;left:1186px;top:561.5px;width:804.5px;height:106px;background:#fff;border:1px solid #d0d0d0;box-sizing:border-box;"></div>
<span class="t" style="left:1207.0px;top:580.0px;font-size:17.3px;letter-spacing:-0.45px;transform:scaleX(0.9518);font-weight:700;color:#4c4c4c;-webkit-text-stroke:0.3px #4c4c4c;">Suspension Fee</span>
<div style="position:absolute;left:1207px;top:608.4px;width:160px;height:44.4px;background:#fff;border:1px solid #cfcfcf;border-radius:6px;box-sizing:border-box;"></div><span class="t" style="left:1218.0px;top:621.0px;font-size:19px;letter-spacing:-0.45px;transform:scaleX(0.9374);color:#333;-webkit-text-stroke:0.15px #333;">No Fee</span><svg style="position:absolute;left:1350.5px;top:627.1px;" width="12" height="7" viewBox="0 0 12 7"><path fill="none" stroke="#333" stroke-width="1.15" stroke-linecap="round" stroke-linejoin="round" d="M1 1 L6 6 L11 1"/></svg>
<span class="t" style="left:1164.8px;top:729.0px;font-size:25px;letter-spacing:-0.45px;transform:scaleX(0.9557);color:#555;-webkit-text-stroke:0.45px #555;">Suspension Warnings</span>
<div style="position:absolute;left:1164.5px;top:769px;width:847px;height:440px;background:#fff;border:1px solid #dcdcdc;box-sizing:border-box;"></div>
<span class="t" style="left:1186.0px;top:803.0px;font-size:19px;letter-spacing:-0.45px;transform:scaleX(0.9352);font-weight:700;color:#e9000f;-webkit-text-stroke:0.3px #e9000f;">Future Sessions Booked</span>
<span class="t" style="left:1186.0px;top:842.0px;font-size:17.3px;letter-spacing:-0.25px;color:#454545;-webkit-text-stroke:0.15px #454545;">Adam Hapana has booked future sessions during the period of suspension. Select the session you wish to</span>
<span class="t" style="left:1186.0px;top:866.0px;font-size:17.3px;letter-spacing:0.07px;color:#454545;-webkit-text-stroke:0.15px #454545;">refund:</span>
<div style="position:absolute;left:1186px;top:885.6px;width:804.5px;height:60px;background:#f5f5f5;border:1px solid #d4d4d4;border-bottom:2px solid #d0d0d0;box-sizing:border-box;"></div>
<span class="t" style="left:1273.9px;top:905.0px;font-size:17.3px;letter-spacing:-0.45px;transform:scaleX(0.9689);font-weight:700;color:#4c4c4c;-webkit-text-stroke:0.3px #4c4c4c;">Session Name</span>
<span class="t" style="left:1541.5px;top:905.0px;font-size:17.3px;letter-spacing:-0.45px;transform:scaleX(0.9807);font-weight:700;color:#4c4c4c;-webkit-text-stroke:0.3px #4c4c4c;">Session Date</span>
<span class="t" style="left:1741.8px;top:905.0px;font-size:17.3px;letter-spacing:-0.36px;font-weight:700;color:#4c4c4c;-webkit-text-stroke:0.3px #4c4c4c;">Payment Status</span>
<span class="t" style="left:1186.0px;top:972.0px;font-size:19px;letter-spacing:-0.45px;transform:scaleX(0.9926);font-weight:700;color:#e9000f;-webkit-text-stroke:0.3px #e9000f;">Credit Overlap Periods</span>
<span class="t" style="left:1186.0px;top:1011.0px;font-size:17.3px;letter-spacing:-0.45px;transform:scaleX(0.9598);font-weight:700;color:#4c4c4c;-webkit-text-stroke:0.3px #4c4c4c;">For Session Type:</span>
<span class="t" style="left:1325.5px;top:1011.0px;font-size:17.3px;letter-spacing:-0.45px;transform:scaleX(0.9887);font-weight:700;color:#f47d20;-webkit-text-stroke:0.3px #f47d20;">Boxing, Group Classes, Unavailable Session, Evolt Body Scan, General Check-In,</span>
<span class="t" style="left:1186.0px;top:1036.0px;font-size:17.3px;letter-spacing:-0.45px;transform:scaleX(0.9918);font-weight:700;color:#f47d20;-webkit-text-stroke:0.3px #f47d20;">Workshops, BOX, BOX, Jay Test, Test Box, Personal Training, Pilates, Yoga 101, Yoga, Restorative,</span>
<span class="t" style="left:1186.0px;top:1060.0px;font-size:17.3px;letter-spacing:-0.45px;transform:scaleX(0.9867);font-weight:700;color:#f47d20;-webkit-text-stroke:0.3px #f47d20;">Boxing 101, Recovery, Strength, HIIT</span>
<div style="position:absolute;left:1186px;top:1080.8px;width:804.5px;height:130px;background:#fff;border:1px solid #d4d4d4;box-sizing:border-box;"></div>
<div style="position:absolute;left:1187px;top:1081.8px;width:802.5px;height:57px;background:#f5f5f5;border-bottom:1px solid #d8d8d8;"></div>
<span class="t" style="left:1273.9px;top:1100.0px;font-size:17.3px;letter-spacing:-0.45px;transform:scaleX(0.9994);font-weight:700;color:#4c4c4c;-webkit-text-stroke:0.3px #4c4c4c;">Credit Period Begin</span>
<span class="t" style="left:1541.5px;top:1100.0px;font-size:17.3px;letter-spacing:-0.45px;transform:scaleX(1.0000);font-weight:700;color:#4c4c4c;-webkit-text-stroke:0.3px #4c4c4c;">Credit Period End</span>
<span class="t" style="left:1741.8px;top:1100.0px;font-size:17.3px;letter-spacing:-0.40px;font-weight:700;color:#4c4c4c;-webkit-text-stroke:0.3px #4c4c4c;">No. Credits</span>
<div style="position:absolute;left:1207px;top:1153.8px;width:23.4px;height:23.4px;border:2.4px solid #858585;border-radius:5px;box-sizing:border-box;background:#fff;"></div>
<span class="t" style="left:1273.9px;top:1158.0px;font-size:17.3px;letter-spacing:-0.21px;color:#454545;-webkit-text-stroke:0.15px #454545;">15/01/2025</span>
<span class="t" style="left:1541.5px;top:1158.0px;font-size:17.3px;letter-spacing:-0.27px;color:#454545;-webkit-text-stroke:0.15px #454545;">31/12/2030</span>
<div style="position:absolute;left:1741.8px;top:1153.8px;width:227.5px;height:50px;border:1px solid #cfcfcf;border-radius:6px;box-sizing:border-box;background:#fff;"></div>
<span class="t" style="left:1747.2px;top:1166.0px;font-size:19px;letter-spacing:1.24px;color:#333;-webkit-text-stroke:0.15px #333;">50000</span>
<div style="position:absolute;left:1144px;top:1186.6px;width:896px;height:87px;background:#fff;border-top:1px solid #dcdcdc;box-sizing:border-box;"></div>
<div style="position:absolute;left:1854px;top:1208.3px;width:159.4px;height:44.4px;background:#161828;border-radius:5px;"></div>
<span class="t" style="left:1875.4px;top:1222.0px;font-size:19px;letter-spacing:-0.32px;color:#fff;-webkit-text-stroke:0.35px #fff;">Update Status</span>
</div>
</body></html>
